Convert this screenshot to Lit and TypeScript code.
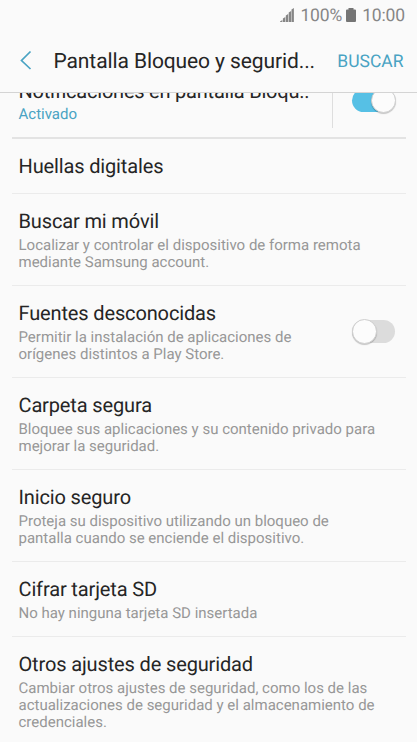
import { LitElement, html, css, svg } from "lit";
import { customElement, property } from "lit/decorators.js";
import { classMap } from "lit/directives/class-map.js";

@customElement("toggle-switch")
class ToggleSwitch extends LitElement {
  @property({ type: Boolean }) on = false;

  static styles = css`
    :host { display: block; width: 45px; height: 26px; flex: none; }
    .track { box-sizing: border-box; width: 43px; height: 23px; margin: 0.5px 0 0 1px; border-radius: 12px; background: #dcdcdc; display: flex; align-items: center; }
    .track.on { background: #56c0e5; justify-content: flex-end; }
    .knob { box-sizing: border-box; flex: none; width: 25px; height: 25px; margin-right: -1px; border-radius: 50%; background: #fcfcfc; border: 1px solid #cfcfcf; box-shadow: 0 1px 1px rgba(0, 0, 0, 0.22); }
  `;

  render() {
    return html`<div class=${classMap({ track: true, on: this.on })}><div class="knob"></div></div>`;
  }
}

interface Setting {
  title: string;
  lines: string[];
  toggle?: boolean;
}

const settings: Setting[] = [
  { title: "Huellas digitales", lines: [] },
  { title: "Buscar mi móvil", lines: ["Localizar y controlar el dispositivo de forma remota", "mediante Samsung account."] },
  { title: "Fuentes desconocidas", lines: ["Permitir la instalación de aplicaciones de", "orígenes distintos a Play Store."], toggle: true },
  { title: "Carpeta segura", lines: ["Bloquee sus aplicaciones y su contenido privado para", "mejorar la seguridad."] },
  { title: "Inicio seguro", lines: ["Proteja su dispositivo utilizando un bloqueo de", "pantalla cuando se enciende el dispositivo."] },
  { title: "Cifrar tarjeta SD", lines: ["No hay ninguna tarjeta SD insertada"] },
  { title: "Otros ajustes de seguridad", lines: ["Cambiar otros ajustes de seguridad, como los de las", "actualizaciones de seguridad y el almacenamiento de", "credenciales."] },
];

@customElement("app-root")
class AppRoot extends LitElement {
  static styles = css`
    :host { display: flex; flex-direction: column; height: 742px; overflow: hidden; background: #fafafa; color: #252525; font-family: Roboto, "Noto Sans", sans-serif; white-space: nowrap; text-rendering: geometricPrecision; }
    .status { flex: none; height: 30px; box-sizing: border-box; padding: 1px 12px 0 0; display: flex; align-items: center; justify-content: flex-end; font-size: 17.5px; letter-spacing: -0.15px; color: #868686; }
    .signal { width: 14px; height: 14px; margin: 0 6px 1px 0; }
    .battery { width: 10px; height: 14px; margin: 0 6px 1px 4px; }
    .bar { flex: none; height: 63px; box-sizing: border-box; border-bottom: 1px solid #d4d4d4; padding: 0 13.5px 1px 20px; display: flex; align-items: center; }
    .back { width: 12px; height: 20px; flex: none; margin: 0 21.5px 1px 0; }
    .heading { flex: 1; font-size: 21px; line-height: 26px; padding-top: 2px; letter-spacing: -0.1px; }
    .search { font-size: 17.5px; color: #49a3c3; padding-top: 2px; }
    .list { flex: 1; min-height: 0; overflow: hidden; }
    .row { margin: 0 11px 0 12px; padding: 15px 10px 13.1px 6.5px; display: flex; align-items: center; justify-content: space-between; border-top: 1px solid #ebebeb; }
    .row.first { border-top: 2px solid #e3e3e3; }
    .row.short { padding-bottom: 15px; }
    .row.partial { border: 0; height: 72px; margin-top: -28px; padding: 0 10px 0 6.5px; box-sizing: border-box; }
    .title { font-size: 20px; line-height: 24px; letter-spacing: -0.14px; }
    .partial .title { letter-spacing: -0.22px; }
    .sub { margin-top: 4px; font-size: 15px; line-height: 17.45px; color: #979797; }
    .partial .sub { margin-top: 3px; color: #49a3c3; }
    .partial .side { display: flex; align-items: center; height: 54px; padding-left: 18px; border-left: 1px solid #dedede; }
  `;

  statusBar() {
    return html`<div class="status">
      <svg class="signal" viewBox="0 0 14 14" fill="#868686">
        ${[[0, 12], [2.9, 9], [5.8, 6], [8.7, 3], [11.5, 0]].map(([x, y]) => svg`<path d="M${x} ${y + 1.5}L${x + 2.4} ${y}V14H${x}Z"/>`)}
      </svg>
      <span>100%</span>
      <svg class="battery" viewBox="0 0 10 14"><path fill="#757575" d="M2.5 0h5v1.5H9q1 0 1 1V13q0 1-1 1H1q-1 0-1-1V2.5q0-1 1-1h1.5z"/></svg>
      <span>10:00</span>
    </div>`;
  }

  settingRow(s: Setting, i: number) {
    return html`<div class=${classMap({ row: true, first: i === 0, short: s.lines.length === 0 })}>
      <div>
        <div class="title">${s.title}</div>
        ${s.lines.length ? html`<div class="sub">${s.lines.map((l) => html`<div>${l}</div>`)}</div>` : ""}
      </div>
      ${s.toggle === undefined ? "" : html`<toggle-switch></toggle-switch>`}
    </div>`;
  }

  render() {
    return html`
      ${this.statusBar()}
      <div class="bar">
        <svg class="back" viewBox="0 0 12 20" fill="none" stroke="#49a3c3" stroke-width="1.7"><path d="M10.5 1.5L1.5 10.5L10.5 19"/></svg>
        <div class="heading">Pantalla Bloqueo y segurid...</div>
        <div class="search">BUSCAR</div>
      </div>
      <div class="list">
        <div class="row partial">
          <div><div class="title">Notificaciones en pantalla Bloqu..</div><div class="sub">Activado</div></div>
          <div class="side"><toggle-switch on></toggle-switch></div>
        </div>
        ${settings.map((s, i) => this.settingRow(s, i))}
      </div>
    `;
  }
}
